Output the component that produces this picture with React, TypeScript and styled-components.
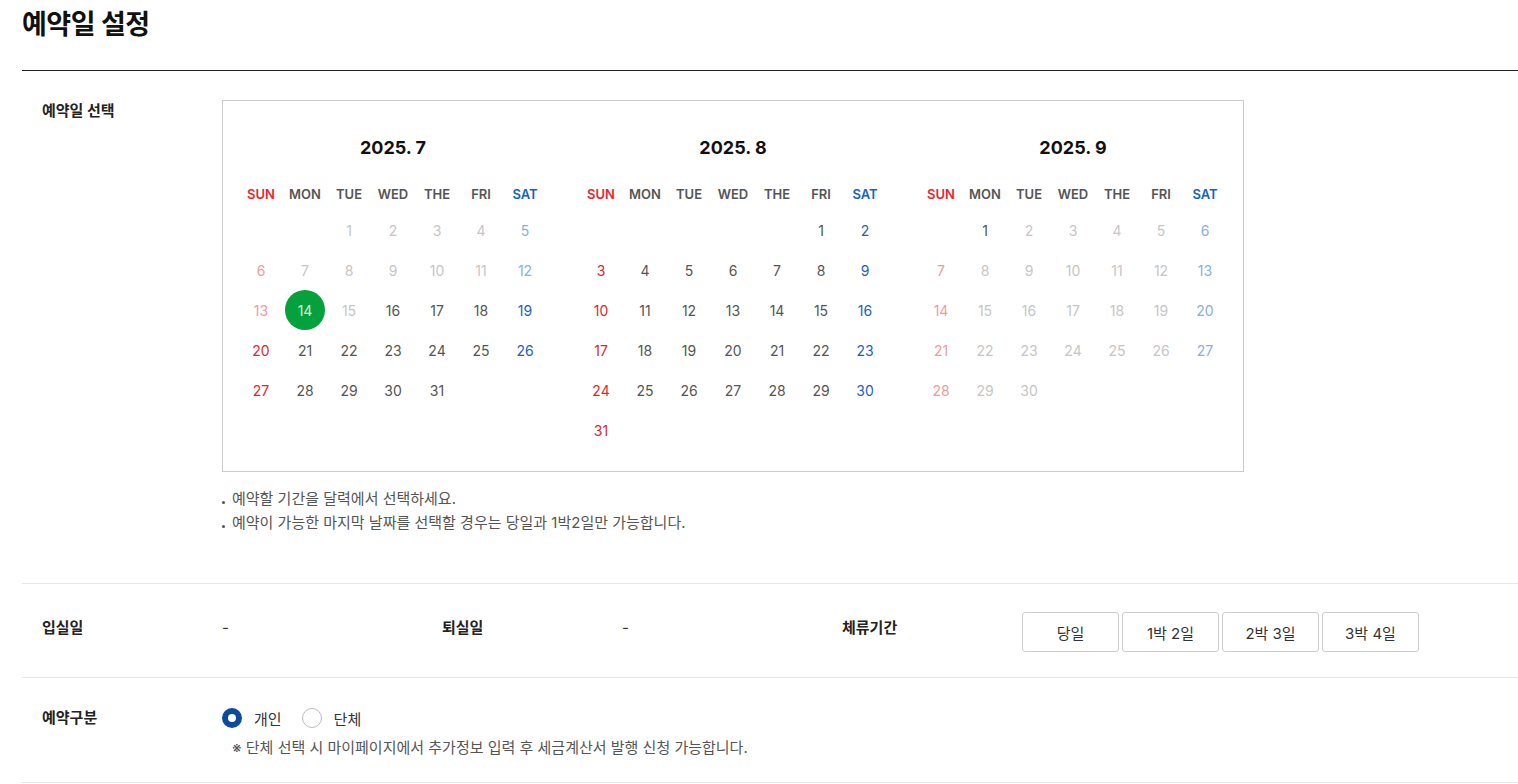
import React from 'react';
import styled, { createGlobalStyle, css } from 'styled-components';

const GlobalStyle = createGlobalStyle`
  * { box-sizing: border-box; }
  body {
    margin: 0;
    background: #fff;
    font-family: 'Inter', 'Noto Sans CJK KR', 'Noto Sans', sans-serif;
    color: #333;
  }
`;

const Page = styled.div`
  padding: 0 0 0 22px;
`;

const Title = styled.h1`
  margin: 0 0 20px;
  height: 50px;
  line-height: 50px;
  font-size: 27px;
  font-weight: 700;
  color: #111;
  letter-spacing: -0.5px;
`;

const Section = styled.section`
  border-top: 1px solid #222;
`;

const Row = styled.div<{ $pad: string }>`
  display: flex;
  align-items: flex-start;
  padding: ${(p) => p.$pad};
  border-bottom: 1px solid #e6e6e6;
`;

const Label = styled.div`
  width: 200px;
  flex-shrink: 0;
  padding-left: 20px;
  font-size: 15px;
  font-weight: 700;
  color: #222;
  line-height: 22px;
`;

const Content = styled.div`
  display: flex;
  flex-direction: column;
`;

const CalendarBox = styled.div`
  width: 1022px;
  display: flex;
  gap: 32px;
  border: 1px solid #ccc;
  padding: 35px 16px 21px;
`;

const Month = styled.div`
  width: 308px;
`;

const MonthTitle = styled.div`
  text-align: center;
  font-size: 18px;
  font-weight: 700;
  line-height: 24px;
  color: #111;
  margin-bottom: 22px;
`;

const WeekRow = styled.div`
  display: grid;
  grid-template-columns: repeat(7, 44px);
  margin-bottom: 4px;
`;

const WeekDay = styled.div<{ $dow: number }>`
  text-align: center;
  font-size: 13px;
  font-weight: 600;
  line-height: 24px;
  color: ${(p) => (p.$dow === 0 ? '#e8272d' : p.$dow === 6 ? '#1462c6' : '#555')};
`;

const DayGrid = styled.div`
  display: grid;
  grid-template-columns: repeat(7, 44px);
  grid-auto-rows: 40px;
`;

type DayState = 'active' | 'disabled' | 'selected';

const activeColor = ['#e0272c', '#555', '#555', '#555', '#555', '#555', '#1a62c2'];
const disabledColor = ['#f29aa0', '#c6c6c6', '#c6c6c6', '#c6c6c6', '#c6c6c6', '#c6c6c6', '#86b0e2'];

const Day = styled.div`
  display: flex;
  align-items: center;
  justify-content: center;
`;

const DayNumber = styled.span<{ $dow: number; $state: DayState }>`
  width: 40px;
  height: 40px;
  border-radius: 50%;
  display: flex;
  align-items: center;
  justify-content: center;
  font-size: 14px;
  color: ${(p) => (p.$state === 'disabled' ? disabledColor[p.$dow] : activeColor[p.$dow])};
  ${(p) =>
    p.$state === 'selected' &&
    css`
      background: #05a13c;
      color: #d4eedb;
    `}
`;

const Notes = styled.ul`
  list-style: none;
  margin: 15px 0 0;
  padding: 0;
`;

const Note = styled.li`
  font-size: 15px;
  line-height: 24px;
  color: #555;
  &::before {
    content: '';
    display: inline-block;
    width: 3px;
    height: 3px;
    border-radius: 50%;
    background: #555;
    margin-right: 7px;
  }
`;

const InfoGroup = styled.div`
  width: 400px;
  display: flex;
  align-items: flex-start;
`;

const InfoLabel = styled(Label)`
  line-height: 30px;
`;

const InfoValue = styled.div`
  font-size: 15px;
  line-height: 30px;
  color: #333;
`;

const Periods = styled.div`
  display: flex;
  gap: 3px;
  margin-top: -1px;
`;

const PeriodButton = styled.button`
  width: 97px;
  height: 40px;
  border: 1px solid #ccc;
  border-radius: 3px;
  background: #fff;
  font-family: inherit;
  font-size: 15px;
  color: #333;
  cursor: pointer;
`;

const RadioGroup = styled.div`
  display: flex;
  align-items: center;
  gap: 20px;
  height: 22px;
`;

const RadioOption = styled.label`
  display: flex;
  align-items: center;
  gap: 12px;
  font-size: 15px;
  color: #333;
`;

const RadioMark = styled.span<{ $checked: boolean }>`
  width: 20px;
  height: 20px;
  border-radius: 50%;
  display: inline-block;
  background: #fff;
  ${(p) =>
    p.$checked
      ? css`
          box-shadow: inset 0 0 0 6px #0b4a9c;
        `
      : css`
          border: 1px solid #bdbdbd;
        `}
`;

const SubNote = styled.p`
  margin: 8px 0 0 10px;
  font-size: 15px;
  line-height: 22px;
  color: #555;
`;

const weekDays = ['SUN', 'MON', 'TUE', 'WED', 'THE', 'FRI', 'SAT'];
const months = [
  { y: 2025, m: 7 },
  { y: 2025, m: 8 },
  { y: 2025, m: 9 },
];

const dayState = (m: number, d: number): DayState => {
  if (m === 7 && d === 14) return 'selected';
  if (m === 7) return d >= 16 ? 'active' : 'disabled';
  if (m === 8) return 'active';
  return d === 1 ? 'active' : 'disabled';
};

const MonthCalendar = ({ y, m }: { y: number; m: number }) => {
  const first = new Date(y, m - 1, 1).getDay();
  const count = new Date(y, m, 0).getDate();
  const cells: (number | null)[] = [
    ...Array(first).fill(null),
    ...Array.from({ length: count }, (_, i) => i + 1),
  ];
  return (
    <Month>
      <MonthTitle>
        {y}. {m}
      </MonthTitle>
      <WeekRow>
        {weekDays.map((w, i) => (
          <WeekDay key={w} $dow={i}>
            {w}
          </WeekDay>
        ))}
      </WeekRow>
      <DayGrid>
        {cells.map((d, i) => (
          <Day key={i}>
            {d !== null && (
              <DayNumber $dow={i % 7} $state={dayState(m, d)}>
                {d}
              </DayNumber>
            )}
          </Day>
        ))}
      </DayGrid>
    </Month>
  );
};

export default function App() {
  return (
    <Page>
      <GlobalStyle />
      <Title>예약일 설정</Title>
      <Section>
        <Row $pad="29px 0 48px">
          <Label>예약일 선택</Label>
          <Content>
            <CalendarBox>
              {months.map((mo) => (
                <MonthCalendar key={mo.m} {...mo} />
              ))}
            </CalendarBox>
            <Notes>
              <Note>예약할 기간을 달력에서 선택하세요.</Note>
              <Note>예약이 가능한 마지막 날짜를 선택할 경우는 당일과 1박2일만 가능합니다.</Note>
            </Notes>
          </Content>
        </Row>
        <Row $pad="29px 0 25px">
          <InfoGroup>
            <InfoLabel>입실일</InfoLabel>
            <InfoValue>-</InfoValue>
          </InfoGroup>
          <InfoGroup>
            <InfoLabel>퇴실일</InfoLabel>
            <InfoValue>-</InfoValue>
          </InfoGroup>
          <InfoGroup>
            <InfoLabel>체류기간</InfoLabel>
            <Periods>
              {['당일', '1박 2일', '2박 3일', '3박 4일'].map((p) => (
                <PeriodButton key={p}>{p}</PeriodButton>
              ))}
            </Periods>
          </InfoGroup>
        </Row>
        <Row $pad="29px 0 23px">
          <Label>예약구분</Label>
          <Content>
            <RadioGroup>
              <RadioOption>
                <RadioMark $checked />
                개인
              </RadioOption>
              <RadioOption>
                <RadioMark $checked={false} />
                단체
              </RadioOption>
            </RadioGroup>
            <SubNote>※ 단체 선택 시 마이페이지에서 추가정보 입력 후 세금계산서 발행 신청 가능합니다.</SubNote>
          </Content>
        </Row>
      </Section>
    </Page>
  );
}
